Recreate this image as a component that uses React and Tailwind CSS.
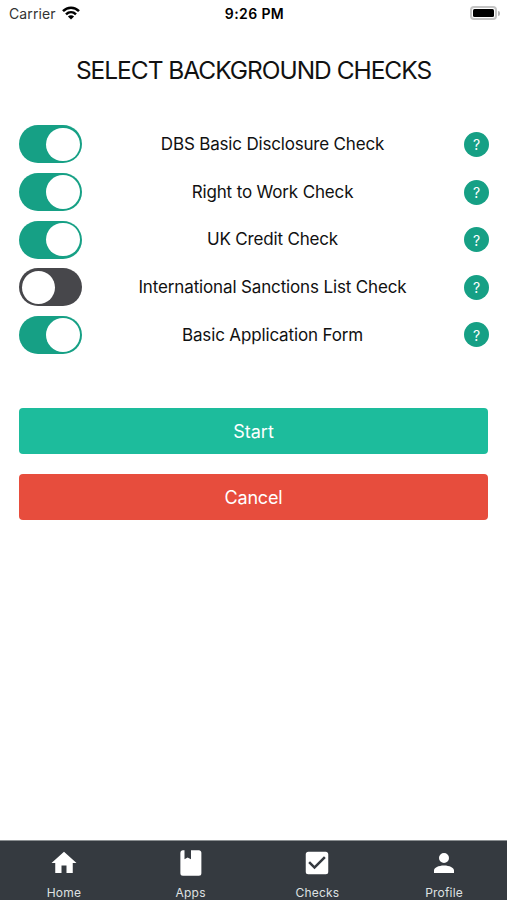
import { useState } from 'react'

const CHECKS = [
  { id: 'dbs', label: 'DBS Basic Disclosure Check', on: true, spacing: 'tracking-[-0.18px]' },
  { id: 'rtw', label: 'Right to Work Check', on: true, spacing: 'tracking-[-0.15px]' },
  { id: 'credit', label: 'UK Credit Check', on: true, spacing: 'tracking-[-0.18px]' },
  { id: 'sanctions', label: 'International Sanctions List Check', on: false, spacing: 'tracking-[-0.14px]' },
  { id: 'form', label: 'Basic Application Form', on: true, spacing: 'tracking-[-0.15px]' },
]

const TABS = [
  { label: 'Home', path: 'M10,20V14H14V20H19V12H22L12,3L2,12H5V20H10Z' },
  { label: 'Apps', path: 'M18.3,22.2A2,2 0 0,0 20.3,20.2V3.8C20.3,2.7 19.4,1.8 18.3,1.8H12V9L9.3,7.6L6.8,9V1.8H5.3A2,2 0 0,0 3.5,3.8V20.2A2,2 0 0,0 5.5,22.2H18.3Z' },
  { label: 'Checks', path: 'M10,17L5,12L6.41,10.58L10,14.17L17.59,6.58L19,8M19,3H5C3.89,3 3,3.89 3,5V19A2,2 0 0,0 5,21H19A2,2 0 0,0 21,19V5C21,3.89 20.1,3 19,3Z' },
  { label: 'Profile', path: 'M12,4A4,4 0 0,1 16,8A4,4 0 0,1 12,12A4,4 0 0,1 8,8A4,4 0 0,1 12,4M12,14C16.42,14 20,15.79 20,18V20H4V18C4,15.79 7.58,14 12,14Z' },
]

function StatusBar() {
  return (
    <div className="grid h-7 grid-cols-3 items-center pl-[9px] pr-[7px] text-black">
      <div className="flex items-center gap-[6px] pb-0.5">
        <span className="text-[14px] tracking-[0.1px] text-[#333]">Carrier</span>
        <svg width="18" height="14" viewBox="0 0 18 14" fill="none" stroke="currentColor" strokeWidth="2.5">
          <path d="M1 5.2C5.5 0.6 12.5 0.6 17 5.2" />
          <path d="M4 8.4C6.9 5.6 11.1 5.6 14 8.4" />
          <path d="M9 13.6L5.9 10.5C7.6 8.9 10.4 8.9 12.1 10.5Z" fill="currentColor" stroke="none" />
        </svg>
      </div>
      <span className="pb-px text-center text-[14px] font-semibold tracking-[0.4px] whitespace-nowrap">9:26 PM</span>
      <div className="flex items-center justify-end gap-px pb-0.5">
        <div className="h-[14px] w-[27px] rounded-[4px] border-2 border-[#c4c4c4] p-px">
          <div className="h-full rounded-[1.5px] bg-black" />
        </div>
        <div className="h-[5px] w-[2px] rounded-r-full bg-[#b5b5b5]" />
      </div>
    </div>
  )
}

function Toggle({ on, label, onClick }) {
  return (
    <button
      role="switch"
      aria-checked={on}
      aria-label={label}
      onClick={onClick}
      className={`flex h-[38px] w-[63px] items-center rounded-full px-[2.5px] ${on ? 'justify-end bg-[#16a085]' : 'justify-start bg-[#47474b]'}`}
    >
      <span className="h-[33.5px] w-[33.5px] rounded-full bg-white" />
    </button>
  )
}

export default function App() {
  const [checks, setChecks] = useState(CHECKS)

  const toggle = id => setChecks(checks.map(c => (c.id === id ? { ...c, on: !c.on } : c)))

  return (
    <div className="flex h-[900px] w-[507px] flex-col overflow-hidden bg-white font-[Inter,sans-serif] text-[#111]">
      <StatusBar />

      <main className="flex-1 px-[19px]">
        <h1 className="mt-[24px] text-center text-[24.5px] leading-9 tracking-[-1.03px] whitespace-nowrap">
          SELECT BACKGROUND CHECKS
        </h1>

        <div className="mt-[37.4px] -mr-px flex flex-col gap-[9.65px]">
          {checks.map(c => (
            <div key={c.id} className="flex h-[38px] items-center">
              <Toggle on={c.on} label={c.label} onClick={() => toggle(c.id)} />
              <p className={`flex-1 pt-px pr-px text-center text-[17px] whitespace-nowrap ${c.spacing}`}>{c.label}</p>
              <button className="flex h-[25px] w-[25px] items-center justify-center rounded-full bg-[#16a085] pt-px text-[14px] text-white">
                ?
              </button>
            </div>
          ))}
        </div>

        {/* Actions */}
        <div className="mt-[54.3px] flex flex-col gap-5 text-[18px] text-white">
          <button className="h-[46px] rounded-[4px] bg-[#1dbc9c]">Start</button>
          <button className="h-[46px] rounded-[4px] bg-[#e74d3d] tracking-[-0.2px]">Cancel</button>
        </div>
      </main>

      {/* Tab bar */}
      <nav className="grid h-[60px] grid-cols-4 border-t border-[#8b8f92] bg-[#353a40]">
        {TABS.map(tab => (
          <a key={tab.label} className="flex flex-col items-center pt-[7px] pl-px text-[#dfe1e2]">
            <svg width="30" height="30" viewBox="0 0 24 24" className="fill-white">
              <path d={tab.path} />
            </svg>
            <span className="mt-[7px] text-[12px] leading-4 tracking-[0.2px]">{tab.label}</span>
          </a>
        ))}
      </nav>
    </div>
  )
}
